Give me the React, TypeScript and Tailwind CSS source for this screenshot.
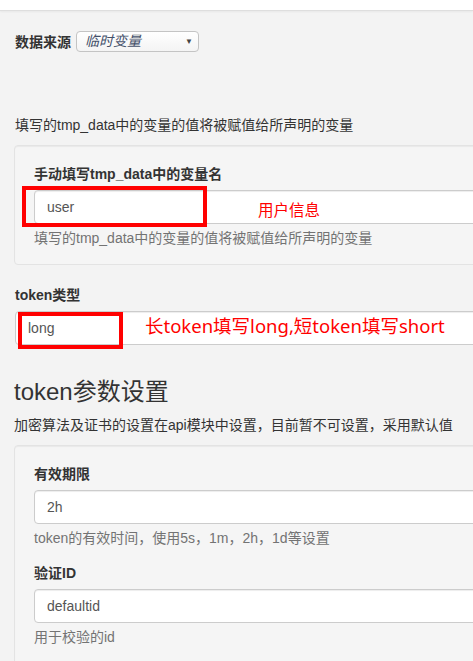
import React from "react";

const font = { fontFamily: '"Liberation Sans", "Noto Sans CJK SC", sans-serif' };

function Field({
  label,
  value,
  help,
  className = "",
  children,
}: {
  label: string;
  value: string;
  help?: string;
  className?: string;
  children?: React.ReactNode;
}) {
  return (
    <div className={className}>
      <div className="text-[14px] leading-[20px] font-bold text-[#333]">{label}</div>
      <div className="relative mt-[6px]">
        <div className="h-[34px] border border-[#ccc] rounded-[4px] bg-white px-[12px] flex items-center text-[14px] text-[#555] shadow-[inset_0_1px_1px_rgba(0,0,0,0.075)]">
          {value}
        </div>
        {children}
      </div>
      {help && <div className="mt-[4px] text-[14px] leading-[20px] text-[#737373]">{help}</div>}
    </div>
  );
}

export default function App() {
  return (
    <div className="w-full min-h-[661px] bg-[#f3f3f3] overflow-hidden" style={font}>
      {/* top bar */}
      <div className="h-[11px] bg-white border-b border-[#dedede] shadow-[0_1px_2px_rgba(0,0,0,0.05)]" />

      <div className="w-[640px] pl-[14px] pt-[20px]">
        {/* data source */}
        <div className="flex items-center h-[21px] gap-[5px] pl-[1px]">
          <span className="text-[14px] font-bold text-[#333] leading-[20px]">数据来源</span>
          <div className="w-[123px] h-[21px] border border-[#c4c4c4] rounded-[4px] bg-gradient-to-b from-white to-[#f4f4f4] flex items-center pl-[8px] pr-[5px]">
            <span className="italic text-[14px] text-[#44506a] flex-1">临时变量</span>
            <span className="text-[8px] text-[#444]">▼</span>
          </div>
        </div>

        <div className="mt-[63px] text-[14px] leading-[20px] text-[#333] pl-[1px]">
          填写的tmp_data中的变量的值将被赋值给所声明的变量
        </div>

        {/* panel 1 */}
        <div className="mt-[10px] border border-[#e3e3e3] rounded-[4px] bg-[#f5f5f5] shadow-[inset_0_1px_1px_rgba(0,0,0,0.05)] pt-[18px] pb-[16px] px-[19px]">
          <Field label="手动填写tmp_data中的变量名" value="user" help="填写的tmp_data中的变量的值将被赋值给所声明的变量">
            <div className="absolute left-[-12px] top-[-4px] w-[185px] h-[41px] border-[4px] border-[#ff0000]" />
            <span
              className="absolute left-[224px] top-[8px] text-[15.5px] leading-[24px] text-[#ff0000]"
              style={{ fontFamily: '"Noto Sans", "Noto Sans CJK SC", sans-serif' }}
            >
              用户信息
            </span>
          </Field>
        </div>

        {/* token type */}
        <Field label="token类型" value="long" className="mt-[20px] pl-[1px]">
          <div className="absolute left-[3px] top-[1px] w-[105px] h-[37px] border-[4px] border-[#ff0000]" />
          <span
            className="absolute left-[130px] top-[2px] text-[18.5px] leading-[26px] text-[#ff0000]"
            style={{ fontFamily: '"Noto Sans", "Noto Sans CJK SC", sans-serif' }}
          >
            长token填写long,短token填写short
          </span>
        </Field>

        <h3 className="mt-[34px] text-[24px] leading-[26px] text-[#333]">token参数设置</h3>
        <div className="mt-[10px] text-[14px] leading-[20px] text-[#333]">
          加密算法及证书的设置在api模块中设置，目前暂不可设置，采用默认值
        </div>

        {/* panel 2 */}
        <div className="mt-[10px] border border-[#e3e3e3] rounded-[4px] bg-[#f5f5f5] shadow-[inset_0_1px_1px_rgba(0,0,0,0.05)] pt-[18px] pb-[20px] px-[19px]">
          <Field label="有效期限" value="2h" help="token的有效时间，使用5s，1m，2h，1d等设置" />
          <Field label="验证ID" value="defaultid" help="用于校验的id" className="mt-[15px]" />
        </div>
      </div>
    </div>
  );
}
